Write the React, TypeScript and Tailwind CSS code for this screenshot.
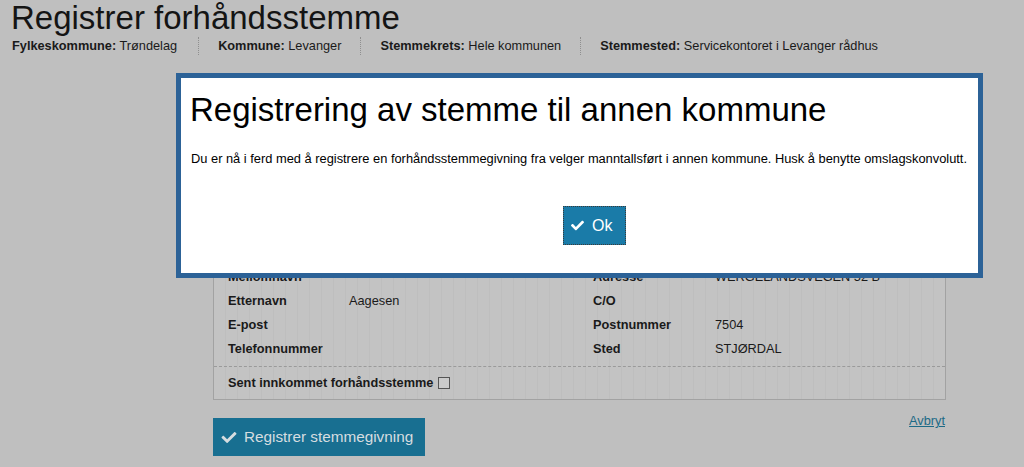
import React from 'react'
import { FaCheck } from 'react-icons/fa'

const info = [
  { label: 'Fylkeskommune:', value: 'Trøndelag' },
  { label: 'Kommune:', value: 'Levanger' },
  { label: 'Stemmekrets:', value: 'Hele kommunen' },
  { label: 'Stemmested:', value: 'Servicekontoret i Levanger rådhus' },
]

const rows = [
  ['Fødselsnummer', '', 'Kommune', ''],
  ['Fornavn', '', 'Manntall', ''],
  ['Mellomnavn', '', 'Adresse', 'WERGELANDSVEGEN 52 B'],
  ['Etternavn', 'Aagesen', 'C/O', ''],
  ['E-post', '', 'Postnummer', '7504'],
  ['Telefonnummer', '', 'Sted', 'STJØRDAL'],
]

const App: React.FC = () => {
  return (
    <div className="relative h-[467px] w-full overflow-hidden bg-[#bfbfbf] font-['Liberation_Sans',Arial,sans-serif] text-[#1a1a1a]">
      {/* Page header */}
      <h1 className="pl-[11px] pt-px text-[33px] leading-[33px] font-normal text-[#141414]">Registrer forhåndsstemme</h1>
      <div className="mt-[3px] flex pl-[12px] text-[12.75px] leading-[16px]">
        {info.map((item, i) => (
          <div
            key={item.label}
            className={`py-px ${i === 0 ? 'pr-[21px]' : 'border-l border-dotted border-[#8f8f8f] px-[19px]'}`}
          >
            <span className="font-bold">{item.label}</span> {item.value}
          </div>
        ))}
      </div>

      {/* Voter panel */}
      <div className="ml-[213px] mt-[154px] w-[733px] border border-[#a2a2a2] bg-[#c3c3c3] bg-[repeating-linear-gradient(90deg,#c3c3c3_0px,#c3c3c3_11px,#bebebe_11px,#bebebe_12px)] text-[12.75px]">
        <div className="pb-[5px] pl-[14px] pt-[7px]">
          {rows.map(([l1, v1, l2, v2]) => (
            <div key={l1} className="grid grid-cols-[121px_244px_122px_1fr] leading-[24px]">
              <span className="font-bold">{l1}</span>
              <span>{v1}</span>
              <span className="font-bold">{l2}</span>
              <span>{v2}</span>
            </div>
          ))}
        </div>
        <div className="flex h-[33px] items-center border-t border-dashed border-[#9a9a9a] pl-[14px]">
          <span className="font-bold">Sent innkommet forhåndsstemme</span>
          <span className="ml-[5px] h-[12px] w-[12px] border border-[#555] bg-[#cbcbcb]" />
        </div>
      </div>

      <div className="ml-[213px] mt-[13px] flex w-[733px] items-start justify-between">
        <button className="mt-[5px] flex h-[38px] w-[212px] items-center gap-[7px] bg-[#186f91] pl-[8px] text-[15.3px] text-[#d6dde0]">
          <FaCheck className="h-[15px] w-[16px] text-[#d6dde0]" />
          Registrer stemmegivning
        </button>
        <a className="mr-px text-[12.75px] leading-[16px] text-[#1d6a86] underline">Avbryt</a>
      </div>

      {/* Dialog */}
      <div className="absolute left-[176px] top-[73px] h-[205px] w-[807px] border-[5px] border-[#2c6297] bg-white px-[9px] pt-[15px] text-black">
        <h2 className="text-[33px] leading-[33px] font-normal">Registrering av stemme til annen kommune</h2>
        <p className="mt-[25px] pl-px text-[12.85px] leading-[16px] whitespace-nowrap">
          Du er nå i ferd med å registrere en forhåndsstemmegivning fra velger manntallsført i annen kommune. Husk å benytte omslagskonvolutt.
        </p>
        <button className="ml-[373px] mt-[39px] flex h-[39px] w-[63px] items-center gap-[8px] border border-dotted border-[#3a3a3a] bg-[#1a7ba8] pl-[7px] text-[16px] text-white">
          <FaCheck className="h-[13px] w-[13px]" />
          Ok
        </button>
      </div>
    </div>
  )
}

export default App
